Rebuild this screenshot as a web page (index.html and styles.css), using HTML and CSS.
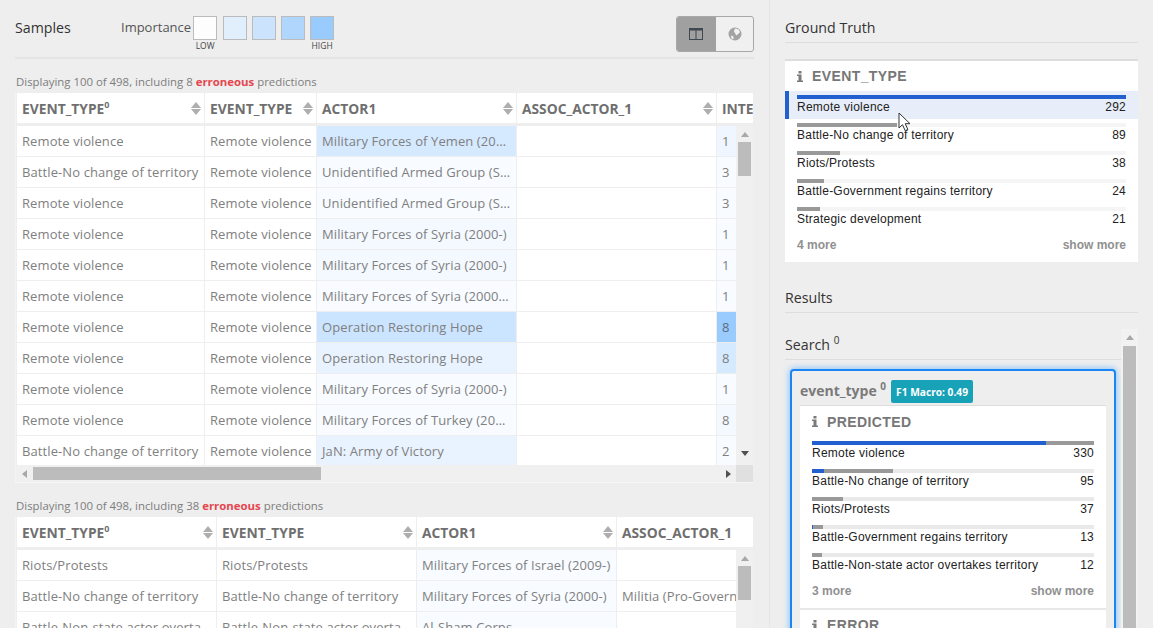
FILE: index.html
```html
<!DOCTYPE html>
<html>
<head>
    <title>Samples</title>
    <link rel="stylesheet" href="styles.css">
</head>
<body>
    <div class="samples">
        <div class="samples-head">
            <h2 class="title">Samples</h2>
            <div class="legend">
                <span class="legend-label">Importance</span>
                <div class="legend-swatches">
                    <div class="swatch-col"><div class="swatch sw-0"></div><span>LOW</span></div>
                    <div class="swatch-col"><div class="swatch sw-1"></div></div>
                    <div class="swatch-col"><div class="swatch sw-2"></div></div>
                    <div class="swatch-col"><div class="swatch sw-3"></div></div>
                    <div class="swatch-col"><div class="swatch sw-4"></div><span>HIGH</span></div>
                </div>
            </div>
            <div class="toggle">
                <div class="toggle-btn active">
                    <svg width="14" height="12" viewBox="0 0 14 12"><path d="M0 0h14v12H0z M1 2.500v8.500h5.500V2.500z M7.500 2.500v8.500H13V2.500z" fill="#3f4750" fill-rule="evenodd"/></svg>
                </div>
                <div class="toggle-btn">
                    <svg width="14" height="14" viewBox="0 0 14 14"><circle cx="7" cy="7" r="6.500" fill="#a3a3a3"/><path d="M7 1.500c2 0 4.500 1 5 3.500-1 1.500-2 2-3 3-.5.500-1.500 0-1.500-1S6 5.500 6 4.500 6.500 2.500 7 1.500zM3 9c1-.5 2 0 2.500 1 .3.800 0 2-.5 2.500-1-.3-2-1.500-2-3.500z" fill="#f2f2f2"/></svg>
                </div>
            </div>
        </div>

        <p class="caption">Displaying 100 of 498, including 8 <b>erroneous</b> predictions</p>
        <div class="table">
            <div class="row head">
                <div class="cell c-a"><span>EVENT_TYPE<sup>0</sup></span><i class="sort"></i></div>
                <div class="cell c-b"><span>EVENT_TYPE</span><i class="sort"></i></div>
                <div class="cell c-w"><span>ACTOR1</span><i class="sort"></i></div>
                <div class="cell c-w"><span>ASSOC_ACTOR_1</span><i class="sort"></i></div>
                <div class="cell c-w"><span>INTER1</span><i class="sort"></i></div>
            </div>
            <div class="table-main">
                <div class="rows">
                    <div class="row"><div class="cell c-a">Remote violence</div><div class="cell c-b">Remote violence</div><div class="cell c-w lv-5">Military Forces of Yemen (2012-2016)</div><div class="cell c-w"></div><div class="cell c-w lv-3">1</div></div>
                    <div class="row"><div class="cell c-a">Battle-No change of territory</div><div class="cell c-b">Remote violence</div><div class="cell c-w lv-1">Unidentified Armed Group (Syria)</div><div class="cell c-w"></div><div class="cell c-w lv-1">3</div></div>
                    <div class="row"><div class="cell c-a">Remote violence</div><div class="cell c-b">Remote violence</div><div class="cell c-w lv-1">Unidentified Armed Group (Syria)</div><div class="cell c-w"></div><div class="cell c-w lv-1">3</div></div>
                    <div class="row"><div class="cell c-a">Remote violence</div><div class="cell c-b">Remote violence</div><div class="cell c-w lv-2">Military Forces of Syria (2000-)</div><div class="cell c-w"></div><div class="cell c-w lv-1">1</div></div>
                    <div class="row"><div class="cell c-a">Remote violence</div><div class="cell c-b">Remote violence</div><div class="cell c-w lv-2">Military Forces of Syria (2000-)</div><div class="cell c-w"></div><div class="cell c-w lv-1">1</div></div>
                    <div class="row"><div class="cell c-a">Remote violence</div><div class="cell c-b">Remote violence</div><div class="cell c-w lv-1">Military Forces of Syria (2000-) Air Force</div><div class="cell c-w"></div><div class="cell c-w lv-1">1</div></div>
                    <div class="row"><div class="cell c-a">Remote violence</div><div class="cell c-b">Remote violence</div><div class="cell c-w lv-6">Operation Restoring Hope</div><div class="cell c-w"></div><div class="cell c-w lv-7">8</div></div>
                    <div class="row"><div class="cell c-a">Remote violence</div><div class="cell c-b">Remote violence</div><div class="cell c-w lv-4">Operation Restoring Hope</div><div class="cell c-w"></div><div class="cell c-w lv-5">8</div></div>
                    <div class="row"><div class="cell c-a">Remote violence</div><div class="cell c-b">Remote violence</div><div class="cell c-w lv-1">Military Forces of Syria (2000-)</div><div class="cell c-w"></div><div class="cell c-w lv-1">1</div></div>
                    <div class="row"><div class="cell c-a">Remote violence</div><div class="cell c-b">Remote violence</div><div class="cell c-w lv-1">Military Forces of Turkey (2002-2016)</div><div class="cell c-w"></div><div class="cell c-w lv-2">8</div></div>
                    <div class="row"><div class="cell c-a">Battle-No change of territory</div><div class="cell c-b">Remote violence</div><div class="cell c-w lv-4">JaN: Army of Victory</div><div class="cell c-w"></div><div class="cell c-w lv-1">2</div></div>
                </div>
                <div class="vbar">
                    <i class="arrow up"></i>
                    <div class="vthumb"></div>
                    <i class="arrow down"></i>
                </div>
            </div>
            <div class="hbar">
                <i class="arrow left"></i>
                <div class="hthumb"></div>
                <i class="arrow right"></i>
                <div class="corner"></div>
            </div>
        </div>

        <p class="caption">Displaying 100 of 498, including 38 <b>erroneous</b> predictions</p>
        <div class="table">
            <div class="row head">
                <div class="cell c-w"><span>EVENT_TYPE<sup>0</sup></span><i class="sort"></i></div>
                <div class="cell c-w"><span>EVENT_TYPE</span><i class="sort"></i></div>
                <div class="cell c-w"><span>ACTOR1</span><i class="sort"></i></div>
                <div class="cell c-w"><span>ASSOC_ACTOR_1</span><i class="sort"></i></div>
            </div>
            <div class="table-main">
                <div class="rows">
                    <div class="row"><div class="cell c-w">Riots/Protests</div><div class="cell c-w">Riots/Protests</div><div class="cell c-w lv-1">Military Forces of Israel (2009-)</div><div class="cell c-w"></div></div>
                    <div class="row"><div class="cell c-w">Battle-No change of territory</div><div class="cell c-w">Battle-No change of territory</div><div class="cell c-w lv-1">Military Forces of Syria (2000-)</div><div class="cell c-w">Militia (Pro-Government)</div></div>
                    <div class="row"><div class="cell c-w">Battle-Non-state actor overtakes territory</div><div class="cell c-w">Battle-Non-state actor overtakes territory</div><div class="cell c-w lv-1">Al-Sham Corps</div><div class="cell c-w"></div></div>
                </div>
                <div class="vbar">
                    <i class="arrow up"></i>
                    <div class="vthumb"></div>
                </div>
            </div>
        </div>
    </div>

    <div class="side">
        <h2 class="title side-title">Ground Truth</h2>
        <div class="card">
            <div class="card-head"><svg class="info" width="6" height="11" viewBox="0 0 6 11"><path d="M1.500 0h3v2.500h-3zM0 3.500h4.500V9.500H6V11H0V9.500h1.500V5H0z"/></svg>EVENT_TYPE</div>
            <div class="hist selected"><div class="track"><div class="fill blue w-gt1"></div></div><div class="hist-row"><span>Remote violence</span><span>292</span></div></div>
            <div class="hist"><div class="track"><div class="fill gray w-gt2"></div></div><div class="hist-row"><span>Battle-No change of territory</span><span>89</span></div></div>
            <div class="hist"><div class="track"><div class="fill gray w-gt3"></div></div><div class="hist-row"><span>Riots/Protests</span><span>38</span></div></div>
            <div class="hist"><div class="track"><div class="fill gray w-gt4"></div></div><div class="hist-row"><span>Battle-Government regains territory</span><span>24</span></div></div>
            <div class="hist"><div class="track"><div class="fill gray w-gt5"></div></div><div class="hist-row"><span>Strategic development</span><span>21</span></div></div>
            <div class="more"><span>4 more</span><span>show more</span></div>
        </div>

        <h2 class="title results-title">Results</h2>
        <div class="results">
            <div class="results-main">
                <div class="search-title">Search <sup>0</sup></div>
                <div class="model">
                    <div class="model-head">
                        <span class="model-name">event_type <sup>0</sup></span>
                        <span class="badge">F1 Macro: 0.49</span>
                    </div>
                    <div class="model-body">
                        <div class="card-head pred"><svg class="info" width="6" height="11" viewBox="0 0 6 11"><path d="M1.500 0h3v2.500h-3zM0 3.500h4.500V9.500H6V11H0V9.500h1.500V5H0z"/></svg>PREDICTED</div>
                        <div class="hist"><div class="track dark"><div class="fill blue w-p1a"></div><div class="fill gray w-p1b"></div></div><div class="hist-row"><span>Remote violence</span><span>330</span></div></div>
                        <div class="hist"><div class="track dark"><div class="fill blue w-p2a"></div><div class="fill gray w-p2b"></div></div><div class="hist-row"><span>Battle-No change of territory</span><span>95</span></div></div>
                        <div class="hist"><div class="track dark"><div class="fill gray w-p3"></div></div><div class="hist-row"><span>Riots/Protests</span><span>37</span></div></div>
                        <div class="hist"><div class="track dark"><div class="fill blue w-p4a"></div><div class="fill gray w-p4b"></div></div><div class="hist-row"><span>Battle-Government regains territory</span><span>13</span></div></div>
                        <div class="hist"><div class="track dark"><div class="fill gray w-p5"></div></div><div class="hist-row"><span>Battle-Non-state actor overtakes territory</span><span>12</span></div></div>
                        <div class="more"><span>3 more</span><span>show more</span></div>
                        <div class="card-head err"><svg class="info" width="6" height="11" viewBox="0 0 6 11"><path d="M1.500 0h3v2.500h-3zM0 3.500h4.500V9.500H6V11H0V9.500h1.500V5H0z"/></svg>ERROR</div>
                    </div>
                </div>
            </div>
            <div class="vbar side-bar">
                <i class="arrow up"></i>
                <div class="vthumb long"></div>
            </div>
        </div>
    </div>

    <svg class="cursor" width="15" height="20" viewBox="0 0 15 20"><path d="M1 1v15l3.500-3.300 2.700 6 2.700-1.200-2.700-5.800H12z" fill="#fff" stroke="#333" stroke-width="1"/></svg>
</body>
</html>
```

FILE: styles.css
```css
html, body {
    height: 100%;
}

body {
    display: flex;
    margin: 0;
    height: 628px;
    overflow: hidden;
    background: #eeeeee;
    font-family: "Open Sans", sans-serif;
    color: #808080;
}

.title {
    margin: 0;
    font-size: 14.200px;
    font-weight: 400;
    color: #333;
}

/* left column */
.samples {
    box-sizing: border-box;
    flex: none;
    width: 770px;
    height: 628px;
    overflow: hidden;
    padding: 0 15px;
    border-right: 1px solid #e5e5e5;
}

.samples-head {
    display: flex;
    align-items: flex-start;
    box-sizing: border-box;
    height: 59px;
    padding-top: 16px;
    border-bottom: 2px solid #e4e4e4;
}

.samples-head .title {
    width: 106px;
    line-height: 24px;
}

.legend {
    display: flex;
    gap: 2px;
    flex: 1;
}

.legend-label {
    font-size: 13px;
    line-height: 22px;
    color: #555;
}

.legend-swatches {
    display: flex;
    gap: 5px;
}

.swatch-col {
    display: flex;
    flex-direction: column;
    align-items: center;
    width: 24px;
    font-size: 8.500px;
    line-height: 12px;
    color: #444;
}

.swatch-col:first-child {
    margin-right: 1px;
}

.swatch {
    box-sizing: border-box;
    flex: none;
    width: 24px;
    height: 24px;
    border: 1px solid #bbb;
}

.sw-0 { background: #fdfdfd; }
.sw-1 { background: #e1eefc; }
.sw-2 { background: #cbe3fd; }
.sw-3 { background: #b1d6fd; }
.sw-4 { background: #99cbfe; }

.toggle {
    display: flex;
    box-sizing: border-box;
    width: 78px;
    height: 36px;
    border: 1px solid #a8a8a8;
    border-radius: 3px;
    overflow: hidden;
    background: #f0f0f0;
}

.toggle-btn {
    display: flex;
    flex: 1;
    align-items: center;
    justify-content: center;
}

.toggle-btn.active {
    flex: none;
    width: 37px;
    padding-right: 2px;
    background: #a0a0a0;
}

.caption {
    margin: 0;
    padding: 15px 0 0 1px;
    height: 19px;
    font-size: 11.400px;
    line-height: 16px;
    color: #7d7d7d;
}

.caption b {
    color: #e5464e;
}

/* tables */
.table {
    width: 738px;
    box-sizing: border-box;
    border-left: 1px solid #f4f4f4;
    overflow: hidden;
}

.row {
    display: flex;
    height: 31px;
    box-sizing: border-box;
    border-bottom: 1px solid #eee;
    background: #fff;
}

.row.head {
    height: 33px;
    border-bottom: 3px solid #eee;
    color: #6f6f6f;
}

.cell {
    display: block;
    flex: none;
    box-sizing: border-box;
    padding: 0 4px 0 5px;
    border-left: 1px solid #eee;
    font-size: 13px;
    letter-spacing: .1px;
    line-height: 30px;
    white-space: nowrap;
    overflow: hidden;
    text-overflow: ellipsis;
}

.head .cell {
    display: flex;
    align-items: center;
    justify-content: space-between;
    padding-right: 2px;
    font-size: 13.800px;
    font-weight: 700;
    letter-spacing: 0;
}

.head span {
    padding-top: 2px;
}

.head sup {
    font-size: 9px;
    line-height: 0;
}

.c-a { width: 188px; }
.c-b { width: 112px; }
.c-w { width: 200px; }

.lv-1 { background: #f8fbff; }
.lv-2 { background: #f4f9ff; }
.lv-3 { background: #eff6ff; }
.lv-4 { background: #e9f3ff; }
.lv-5 { background: #d5e9ff; }
.lv-6 { background: #cbe4ff; }
.lv-7 { background: #99cbfe; color: #5e6d7c; }

.sort {
    display: flex;
    flex-direction: column;
    flex: none;
    gap: 1px;
    width: 11px;
}

.sort::before,
.sort::after {
    content: "";
    width: 0;
    height: 0;
    border-left: 5.500px solid transparent;
    border-right: 5.500px solid transparent;
}

.sort::before {
    border-bottom: 6px solid #aeaeae;
}

.sort::after {
    border-top: 6px solid #aeaeae;
}

.table-main {
    display: flex;
    height: 339px;
}

.rows {
    flex: none;
    width: 720px;
    overflow: hidden;
}

/* drawn scrollbars */
.vbar {
    display: flex;
    flex-direction: column;
    align-items: center;
    flex: 1;
    box-sizing: border-box;
    padding: 0 2px 3px;
    background: #f0f0f0;
}

.vthumb {
    flex: none;
    width: 13px;
    height: 34px;
    background: #bcbcbc;
}

.vthumb.long {
    height: 300px;
}

.arrow {
    width: 0;
    height: 0;
    flex: none;
}

.arrow.up {
    margin: 6px 0 5px;
    border-left: 4px solid transparent;
    border-right: 4px solid transparent;
    border-bottom: 5px solid #a8a8a8;
}

.arrow.down {
    margin-top: auto;
    margin-bottom: 6px;
    border-left: 4px solid transparent;
    border-right: 4px solid transparent;
    border-top: 5px solid #505050;
}

.hbar {
    display: flex;
    align-items: center;
    height: 17px;
    background: #f0f0f0;
    border-bottom: 1px solid #f6f6f6;
}

.hthumb {
    flex: none;
    width: 288px;
    height: 13px;
    margin-left: 6px;
    background: #bcbcbc;
}

.arrow.left {
    margin-left: 6px;
    border-top: 4px solid transparent;
    border-bottom: 4px solid transparent;
    border-right: 5px solid #a8a8a8;
}

.arrow.right {
    margin-left: auto;
    margin-right: 5px;
    border-top: 4px solid transparent;
    border-bottom: 4px solid transparent;
    border-left: 5px solid #505050;
}

.corner {
    flex: none;
    width: 17px;
    height: 17px;
    background: #e0e0e0;
}

/* right column */
.side {
    flex: 1;
    padding: 0 15px;
    min-width: 0;
    height: 628px;
    overflow: hidden;
}

.side-title {
    box-sizing: border-box;
    height: 43px;
    padding-top: 18px;
    line-height: 20px;
    border-bottom: 1px solid #ddd;
}

.card {
    margin-top: 16px;
    padding-bottom: 8px;
    background: #fff;
    border-top: 2px solid #ddd;
}

.card-head {
    display: flex;
    align-items: center;
    gap: 9px;
    padding: 0 12px;
    height: 30px;
    font-family: "Liberation Sans", sans-serif;
    font-size: 14px;
    font-weight: 700;
    letter-spacing: .4px;
    color: #777;
}

.info {
    fill: #7a7a7a;
}

.hist {
    box-sizing: border-box;
    height: 28px;
    padding: 4px 12px 0;
    font-family: "Liberation Sans", sans-serif;
    font-size: 12px;
    color: #222;
}

.hist.selected {
    padding-left: 8px;
    border-left: 4px solid #2360cf;
    background: #e8eef9;
}

.track {
    display: flex;
    height: 4px;
    background: #f5f5f5;
}

.track.dark {
    background: #e9e9e9;
}

.fill {
    height: 100%;
}

.fill.blue { background: #2360cf; }
.fill.gray { background: #999; }

.w-gt1 { width: 100%; }
.w-gt2 { width: 100px; }
.w-gt3 { width: 43px; }
.w-gt4 { width: 27px; }
.w-gt5 { width: 23px; }
.w-p1a { width: 234px; }
.w-p1b { width: 48px; }
.w-p2a { width: 12px; }
.w-p2b { width: 69px; }
.w-p3 { width: 31px; }
.w-p4a { width: 1px; }
.w-p4b { width: 10px; }
.w-p5 { width: 10px; }

.hist-row,
.more {
    display: flex;
    justify-content: space-between;
}

.hist-row {
    margin-top: 1px;
    letter-spacing: .24px;
    line-height: 15px;
}

.more {
    padding: 5px 12px 0;
    font-family: "Liberation Sans", sans-serif;
    font-size: 12px;
    font-weight: 700;
    line-height: 18px;
    color: #909090;
}

.results-title {
    box-sizing: border-box;
    height: 51px;
    padding-top: 26px;
    line-height: 20px;
    border-bottom: 1px solid #ddd;
}

.results {
    display: flex;
    margin-top: 16px;
    height: 400px;
}

.results-main {
    flex: none;
    width: 336px;
}

.search-title {
    box-sizing: border-box;
    height: 31px;
    padding-top: 6px;
    font-size: 14.200px;
    line-height: 20px;
    color: #333;
    border-bottom: 1px solid #ddd;
}

.search-title sup,
.model-name sup {
    font-size: 10px;
    line-height: 0;
}

.side-bar {
    padding: 0 2px;
    background: #f2f2f2;
}

.side-bar .arrow.up {
    margin-bottom: 6px;
}

.model {
    margin: 9px 5px 0;
    padding: 0 8px;
    height: 400px;
    background: #eee;
    border: 2px solid #1a86f5;
    border-radius: 4px;
    box-shadow: 0 0 6px 1px #8cc4fb;
}

.model-head {
    display: flex;
    align-items: center;
    gap: 5px;
    box-sizing: border-box;
    height: 34px;
    padding-top: 7px;
}

.model-name {
    margin-bottom: 2px;
    font-size: 14px;
    font-weight: 700;
    color: #7a7a7a;
}

.badge {
    box-sizing: border-box;
    height: 23px;
    padding: 0 5px;
    border-radius: 2px;
    background: #17a2b8;
    color: #fff;
    font-size: 10.200px;
    font-weight: 700;
    line-height: 25px;
}

.model-body {
    background: #fff;
    border-top: 1px solid #ddd;
}

.pred {
    height: 31px;
}

.err {
    height: 30px;
    margin-top: 8px;
    border-top: 2px solid #e8e8e8;
}

.cursor {
    position: absolute;
    left: 898px;
    top: 112px;
}
```
